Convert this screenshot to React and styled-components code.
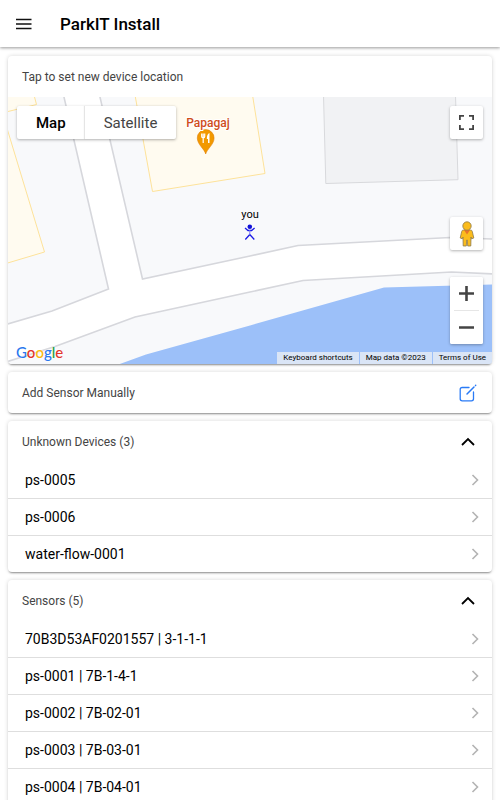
import React, { useState } from 'react';
import styled, { createGlobalStyle } from 'styled-components';

const unknownDevices = ['ps-0005', 'ps-0006', 'water-flow-0001'];

const sensors = [
  '70B3D53AF0201557 | 3-1-1-1',
  'ps-0001 | 7B-1-4-1',
  'ps-0002 | 7B-02-01',
  'ps-0003 | 7B-03-01',
  'ps-0004 | 7B-04-01',
];

const GlobalStyle = createGlobalStyle`
  * {
    box-sizing: border-box;
  }
  body {
    margin: 0;
    background: #fff;
    color: #000;
    font-family: Roboto, "Liberation Sans", sans-serif;
  }
  button {
    margin: 0;
    padding: 0;
    border: none;
    background: none;
    color: inherit;
    font: inherit;
    cursor: pointer;
  }
  svg {
    display: block;
  }
`;

const MapDrawing = () => (
  <MapSvg viewBox="0 0 484 267" preserveAspectRatio="xMidYMid slice" aria-hidden="true">
    <rect width="484" height="267" fill="#f8f9fb" />
    <path
      d="M55.5 -2 L100.5 192 L44 214 L-2 227.5 V265 L47 249.5 L127 220 L242 195 L295 183.5 L443.5 175 L486 177 V142 L442 140.5 L290 148.5 L242 159 L134.5 182 L91.5 -2 Z"
      fill="#fff"
      stroke="#d6d7dc"
      strokeWidth="1.6"
    />
    <path d="M109 268 L138 257.5 L242 228.500 L376 190.500 L484 187.500 V268 Z" fill="#9cc0f9" />
    <g fill="#fffbf0" stroke="#fde29a">
      <path d="M-2 -2 H26 L28.500 7.500 L-2 15 Z" />
      <path d="M-2 28 L36.500 155 L-2 166.500 Z" />
      <path d="M127 -2 L144.500 94.500 L257 76.500 L244.500 -2 Z" />
    </g>
    <path d="M315.500 -2 L317.800 86.500 L450 82.700 L447.500 -2 Z" fill="#f1f2f4" stroke="#d8d9dc" />
    <path
      d="M197.700 57 C196.500 52 189.300 47.500 189.300 41 A8.400 8.400 0 0 1 206.100 41 C206.100 47.500 198.900 52 197.700 57 Z"
      fill="#f29900"
      stroke="#e07f0a"
      strokeWidth="0.6"
    />
    <path
      d="M193.700 36.500 V39.500 Q193.700 41 195.200 41 Q196.700 41 196.700 39.500 V36.500 M195.200 36.500 V46"
      fill="none"
      stroke="#fff"
      strokeWidth="1.200"
    />
    <path d="M201.500 36 Q198.800 37 198.800 42 H200 V46 H201.500 Z" fill="#fff" />
    <PlaceName x="200" y="30">Papagaj</PlaceName>
    <UserName x="242" y="121">you</UserName>
    <circle cx="241.800" cy="129.700" r="2.300" fill="#1111d8" />
    <path
      d="M237 131 L240 133.500 H243.600 L246.600 131 M237.300 142.500 L241.800 137.500 L246.300 142.500"
      fill="none"
      stroke="#1a1ae6"
      strokeWidth="1.300"
    />
    <path d="M241.800 133 V138" stroke="#7d7df0" strokeWidth="1" />
  </MapSvg>
);

const Pegman = () => (
  <svg width="16" height="26" viewBox="0 0 16 26" aria-hidden="true">
    <path
      d="M4.500 9 H11.500 Q13 9 13.300 10.500 L14.800 17 L12.700 17.800 L12 16 L11.800 25 H8.700 L8.300 19 H7.700 L7.300 25 H4.200 L4 16 L3.300 17.800 L1.200 17 L2.700 10.500 Q3 9 4.500 9 Z"
      fill="#fbbc1c"
      stroke="#8d7a4b"
      strokeWidth="0.800"
    />
    <path d="M5 9 H11 L8 13.500 Z" fill="#e8732a" />
    <circle cx="8" cy="5" r="4.200" fill="#fbbc1c" stroke="#8d7a4b" strokeWidth="0.800" />
  </svg>
);

const EditIcon = () => (
  <svg width="18" height="18" viewBox="0 0 18 18" fill="none" stroke="#2a7bf6" strokeWidth="1.300" strokeLinecap="round">
    <path d="M10 3.500 H3.200 Q1.200 3.500 1.200 5.500 V14.800 Q1.200 16.800 3.200 16.800 H12.500 Q14.500 16.800 14.500 14.800 V8" />
    <path d="M8 10 L15 3 M16.500 1.500 L16.700 1.300" strokeWidth="1.500" />
  </svg>
);

const DeviceCard = ({ title, devices }) => {
  const [open, setOpen] = useState(true);

  return (
    <Card>
      <CardHeader>
        <CardTitle>{title} ({devices.length})</CardTitle>
        <IconButton aria-label={`Toggle ${title}`} aria-expanded={open} onClick={() => setOpen(!open)}>
          <Caret $open={open} width="16" height="16" viewBox="0 0 16 16">
            <path d="M2 11 L8 5 L14 11" fill="none" stroke="#000" strokeWidth="1.800" />
          </Caret>
        </IconButton>
      </CardHeader>
      {open && (
        <List>
          {devices.map((device) => (
            <li key={device}>
              <Row>
                <span>{device}</span>
                <svg width="8" height="12" viewBox="0 0 8 12" aria-hidden="true">
                  <path d="M1.500 1 L6.500 6 L1.500 11" fill="none" stroke="#b3b3b3" strokeWidth="1.600" />
                </svg>
              </Row>
            </li>
          ))}
        </List>
      )}
    </Card>
  );
};

const App = () => {
  const [mapType, setMapType] = useState('Map');

  return (
    <>
      <GlobalStyle />
      <Toolbar>
        <MenuButton aria-label="Menu">
          <svg width="16" height="12" viewBox="0 0 16 12" stroke="#111" strokeWidth="1.500">
            <path d="M0 1.500 H15.500 M0 6 H15.500 M0 10.500 H15.500" />
          </svg>
        </MenuButton>
        <Title>ParkIT Install</Title>
      </Toolbar>

      <Content>
        <Card>
          <CardHeader>
            <CardTitle>Tap to set new device location</CardTitle>
          </CardHeader>
          <MapArea>
            <MapDrawing />
            <MapTypes>
              {['Map', 'Satellite'].map((type) => (
                <MapType key={type} $active={mapType === type} onClick={() => setMapType(type)}>
                  {type}
                </MapType>
              ))}
            </MapTypes>
            <MapControls>
              <MapButton aria-label="Toggle fullscreen view">
                <svg width="15" height="15" viewBox="0 0 15 15" fill="none" stroke="#444" strokeWidth="1.800">
                  <path d="M0.900 5 V0.900 H5 M10 0.900 H14.100 V5 M14.100 10 V14.100 H10 M5 14.100 H0.900 V10" />
                </svg>
              </MapButton>
              <ControlGroup>
                <MapButton aria-label="Open Street View">
                  <Pegman />
                </MapButton>
                <ZoomBox>
                  <MapButton $flat aria-label="Zoom in">
                    <svg width="15" height="15" viewBox="0 0 15 15" stroke="#444" strokeWidth="2.600">
                      <path d="M0 7.500 H15 M7.500 0 V15" />
                    </svg>
                  </MapButton>
                  <ZoomLine />
                  <MapButton $flat aria-label="Zoom out">
                    <svg width="15" height="15" viewBox="0 0 15 15" stroke="#444" strokeWidth="2.600">
                      <path d="M0 7.500 H15" />
                    </svg>
                  </MapButton>
                </ZoomBox>
              </ControlGroup>
            </MapControls>
            <Logo href="#google">
              <Letter $color="#2a78ee">G</Letter>
              <Letter $color="#e3342b">o</Letter>
              <Letter $color="#fbb90d">o</Letter>
              <Letter $color="#2a78ee">g</Letter>
              <Letter $color="#1fa045">l</Letter>
              <Letter $color="#e3342b">e</Letter>
            </Logo>
            <Legal>
              <LegalItem as="button">Keyboard shortcuts</LegalItem>
              <LegalItem>Map data ©2023</LegalItem>
              <LegalItem as="a" href="#terms">Terms of Use</LegalItem>
            </Legal>
          </MapArea>
        </Card>

        <Card>
          <CardHeader>
            <CardTitle>Add Sensor Manually</CardTitle>
            <IconButton aria-label="Add sensor">
              <EditIcon />
            </IconButton>
          </CardHeader>
        </Card>

        <DeviceCard title="Unknown Devices" devices={unknownDevices} />
        <DeviceCard title="Sensors" devices={sensors} />
      </Content>
    </>
  );
};

const Toolbar = styled.header`
  display: flex;
  align-items: center;
  height: 47px;
  padding: 0 12px;
  background: #fff;
  box-shadow: 0 1px 3px rgba(0, 0, 0, 0.4);
`;

const MenuButton = styled.button`
  display: flex;
  align-items: center;
  justify-content: center;
  width: 24px;
  height: 32px;
`;

const Title = styled.h1`
  margin: 0 0 0 24px;
  font-size: 17px;
  font-weight: 500;
  line-height: 24px;
`;

const Content = styled.main`
  display: flex;
  flex-direction: column;
  gap: 8px;
  padding: 9px 8px;
`;

const Card = styled.section`
  overflow: hidden;
  border-radius: 4px;
  background: #fff;
  box-shadow: 0 2px 2px -1px rgba(0, 0, 0, 0.4), 0 0 4px rgba(0, 0, 0, 0.16);
`;

const CardHeader = styled.div`
  display: flex;
  align-items: center;
  justify-content: space-between;
  height: 41px;
  padding: 0 12px 0 14px;
`;

const CardTitle = styled.h2`
  margin: 0;
  color: #444;
  font-size: 12px;
  font-weight: 400;
  line-height: 16px;
`;

const IconButton = styled.button`
  display: flex;
  align-items: center;
  justify-content: center;
  width: 24px;
  height: 24px;
`;

const Caret = styled.svg`
  transform: ${({ $open }) => ($open ? 'none' : 'rotate(180deg)')};
`;

const List = styled.ul`
  margin: 0;
  padding: 0;
  list-style: none;
  li + li {
    border-top: 1px solid #dedede;
  }
`;

const Row = styled.button`
  display: flex;
  align-items: center;
  justify-content: space-between;
  width: 100%;
  height: 36px;
  padding: 0 13px 0 17px;
  font-size: 14px;
  line-height: 20px;
  text-align: left;
`;

const MapArea = styled.div`
  position: relative;
  height: 267px;
  overflow: hidden;
`;

const MapSvg = styled.svg`
  width: 100%;
  height: 100%;
`;

const PlaceName = styled.text`
  fill: #cf4d1c;
  stroke: #fff;
  stroke-width: 2px;
  paint-order: stroke;
  font-size: 12px;
  font-weight: 500;
  text-anchor: middle;
`;

const UserName = styled.text`
  font-size: 11px;
  text-anchor: middle;
`;

const MapTypes = styled.div`
  display: flex;
  position: absolute;
  top: 9px;
  left: 9px;
  background: #fff;
  border-radius: 2px;
  box-shadow: 0 1px 3px rgba(0, 0, 0, 0.3);
`;

const MapType = styled.button`
  height: 33px;
  padding: 0 19px;
  color: ${({ $active }) => ($active ? '#000' : '#444')};
  font-size: 15px;
  font-weight: ${({ $active }) => ($active ? 500 : 400)};
  & + & {
    box-shadow: -1px 0 1px rgba(0, 0, 0, 0.1);
  }
`;

const MapControls = styled.div`
  display: flex;
  flex-direction: column;
  justify-content: space-between;
  position: absolute;
  top: 9px;
  right: 9px;
  bottom: 20px;
`;

const ControlGroup = styled.div`
  display: flex;
  flex-direction: column;
  gap: 27px;
`;

const MapButton = styled.button`
  display: flex;
  align-items: center;
  justify-content: center;
  width: 33px;
  height: 33px;
  background: #fff;
  border-radius: 2px;
  box-shadow: ${({ $flat }) => ($flat ? 'none' : '0 1px 3px rgba(0, 0, 0, 0.3)')};
`;

const ZoomBox = styled.div`
  background: #fff;
  border-radius: 2px;
  box-shadow: 0 1px 3px rgba(0, 0, 0, 0.3);
`;

const ZoomLine = styled.div`
  height: 1px;
  margin: 0 4px;
  background: #e6e6e6;
`;

const Logo = styled.a`
  position: absolute;
  left: 8px;
  bottom: 2px;
  font-family: Lato, sans-serif;
  font-size: 15px;
  font-weight: 500;
  line-height: 20px;
  text-decoration: none;
  text-shadow: 0 0 2px #fff;
`;

const Letter = styled.span`
  color: ${({ $color }) => $color};
`;

const Legal = styled.div`
  display: flex;
  gap: 1px;
  position: absolute;
  right: 0;
  bottom: 0;
`;

const LegalItem = styled.span`
  padding: 0 6px;
  background: rgba(245, 245, 245, 0.7);
  color: #000;
  font-size: 8px;
  line-height: 12px;
  text-decoration: none;
`;

export default App;
